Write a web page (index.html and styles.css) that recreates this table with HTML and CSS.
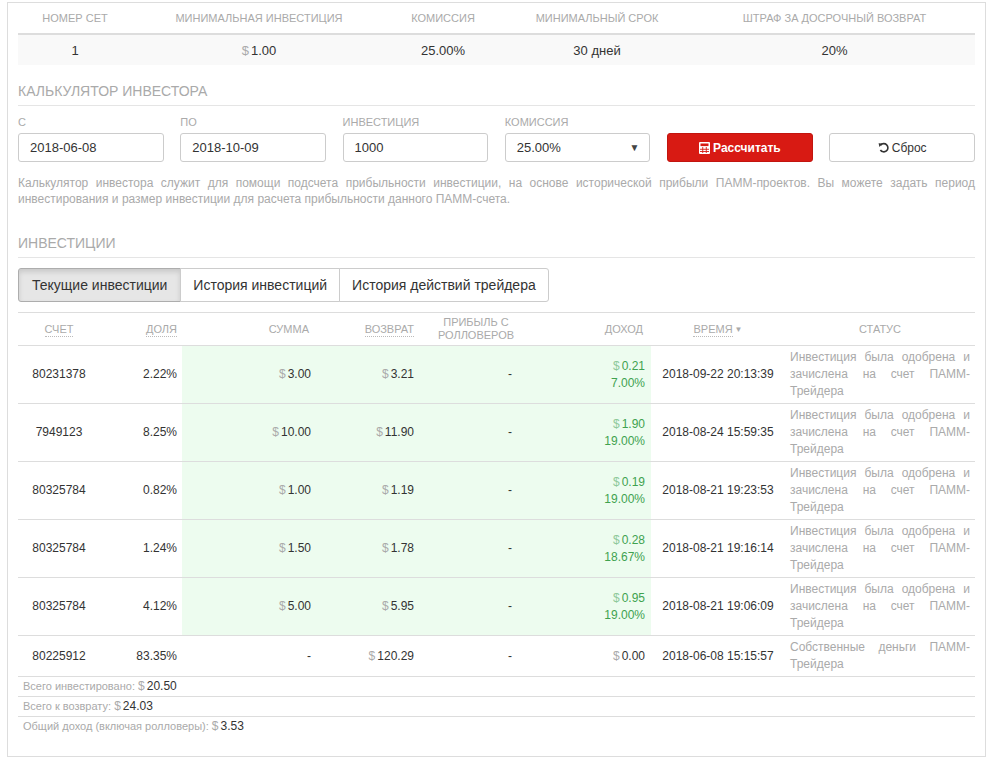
FILE: index.html
```html
<!DOCTYPE html>
<html lang="ru">
<head>
<meta charset="utf-8">
<title>ПАММ-счет</title>
<link rel="stylesheet" href="styles.css">
</head>
<body>
<div class="panel">
  <table class="info">
    <colgroup>
      <col class="ic1"><col class="ic2"><col class="ic3"><col class="ic4"><col class="ic5">
    </colgroup>
    <thead>
      <tr><th>Номер сет</th><th>Минимальная инвестиция</th><th>Комиссия</th><th>Минимальный срок</th><th>Штраф за досрочный возврат</th></tr>
    </thead>
    <tbody>
      <tr><td>1</td><td><span class="cur">$</span>1.00</td><td>25.00%</td><td>30 дней</td><td>20%</td></tr>
    </tbody>
  </table>

  <h3 class="section calc-title">Калькулятор инвестора</h3>
  <div class="calc">
    <div class="field"><label class="lbl">С</label><input class="control" type="text" value="2018-06-08"></div>
    <div class="field"><label class="lbl">По</label><input class="control" type="text" value="2018-10-09"></div>
    <div class="field"><label class="lbl">Инвестиция</label><input class="control" type="text" value="1000"></div>
    <div class="field"><label class="lbl">Комиссия</label><div class="control select">25.00%<span class="caret">▼</span></div></div>
    <div class="field"><button class="btn btn-red" type="button"><svg class="ico" width="11" height="12" viewBox="0 0 11 12"><rect x="0" y="0" width="11" height="12" rx="1" fill="#fff"/><rect x="1.5" y="1.5" width="8" height="2.6" fill="#d81a13"/><g fill="#d81a13"><rect x="3.3" y="5" width="0.9" height="6"/><rect x="6.8" y="5" width="0.9" height="6"/><rect x="1" y="6.8" width="9" height="0.9"/><rect x="1" y="9" width="9" height="0.9"/></g></svg>Рассчитать</button></div>
    <div class="field"><button class="btn btn-default" type="button"><svg class="ico" width="11" height="11" viewBox="0 0 11 11"><path d="M2.6 3.2 A4.1 4.1 0 1 1 2.4 8" fill="none" stroke="#333" stroke-width="1.6"/><polygon points="0.6,1.2 4.6,1.6 1.4,5" fill="#333"/></svg>Сброс</button></div>
  </div>
  <p class="desc">Калькулятор инвестора служит для помощи подсчета прибыльности инвестиции, на основе исторической прибыли ПАММ-проектов. Вы можете задать период инвестирования и размер инвестиции для расчета прибыльности данного ПАММ-счета.</p>

  <h3 class="section inv-title">Инвестиции</h3>
  <div class="tabs">
    <div class="tab active">Текущие инвестиции</div>
    <div class="tab">История инвестиций</div>
    <div class="tab">История действий трейдера</div>
  </div>

  <table class="inv">
    <colgroup>
      <col class="c1"><col class="c2"><col class="c3"><col class="c4"><col class="c5"><col class="c6"><col class="c7"><col class="c8">
    </colgroup>
    <thead>
      <tr>
        <th class="a-c"><span class="sort">Счет</span></th>
        <th class="a-r p2"><span class="sort">Доля</span></th>
        <th class="a-r p3">Сумма</th>
        <th class="a-r p4"><span class="sort">Возврат</span></th>
        <th class="a-c two">Прибыль с<br>ролловеров</th>
        <th class="a-r p6">Доход</th>
        <th class="a-c"><span class="sort">Время</span><span class="tri">▼</span></th>
        <th class="a-c">Статус</th>
      </tr>
    </thead>
    <tbody>
      <tr>
        <td class="a-c">80231378</td><td class="a-r p2">2.22%</td>
        <td class="a-r p3 g"><span class="cur">$</span>3.00</td><td class="a-r p4 g"><span class="cur">$</span>3.21</td>
        <td class="a-r p5 g">-</td><td class="a-r p6 g inc"><span class="cur">$</span>0.21<br>7.00%</td>
        <td class="a-c">2018-09-22 20:13:39</td><td class="status">Инвестиция была одобрена и зачислена на счет ПАММ-Трейдера</td>
      </tr>
      <tr>
        <td class="a-c">7949123</td><td class="a-r p2">8.25%</td>
        <td class="a-r p3 g"><span class="cur">$</span>10.00</td><td class="a-r p4 g"><span class="cur">$</span>11.90</td>
        <td class="a-r p5 g">-</td><td class="a-r p6 g inc"><span class="cur">$</span>1.90<br>19.00%</td>
        <td class="a-c">2018-08-24 15:59:35</td><td class="status">Инвестиция была одобрена и зачислена на счет ПАММ-Трейдера</td>
      </tr>
      <tr>
        <td class="a-c">80325784</td><td class="a-r p2">0.82%</td>
        <td class="a-r p3 g"><span class="cur">$</span>1.00</td><td class="a-r p4 g"><span class="cur">$</span>1.19</td>
        <td class="a-r p5 g">-</td><td class="a-r p6 g inc"><span class="cur">$</span>0.19<br>19.00%</td>
        <td class="a-c">2018-08-21 19:23:53</td><td class="status">Инвестиция была одобрена и зачислена на счет ПАММ-Трейдера</td>
      </tr>
      <tr>
        <td class="a-c">80325784</td><td class="a-r p2">1.24%</td>
        <td class="a-r p3 g"><span class="cur">$</span>1.50</td><td class="a-r p4 g"><span class="cur">$</span>1.78</td>
        <td class="a-r p5 g">-</td><td class="a-r p6 g inc"><span class="cur">$</span>0.28<br>18.67%</td>
        <td class="a-c">2018-08-21 19:16:14</td><td class="status">Инвестиция была одобрена и зачислена на счет ПАММ-Трейдера</td>
      </tr>
      <tr>
        <td class="a-c">80325784</td><td class="a-r p2">4.12%</td>
        <td class="a-r p3 g"><span class="cur">$</span>5.00</td><td class="a-r p4 g"><span class="cur">$</span>5.95</td>
        <td class="a-r p5 g">-</td><td class="a-r p6 g inc"><span class="cur">$</span>0.95<br>19.00%</td>
        <td class="a-c">2018-08-21 19:06:09</td><td class="status">Инвестиция была одобрена и зачислена на счет ПАММ-Трейдера</td>
      </tr>
      <tr>
        <td class="a-c">80225912</td><td class="a-r p2">83.35%</td>
        <td class="a-r p3">-</td><td class="a-r p4"><span class="cur">$</span>120.29</td>
        <td class="a-r p5">-</td><td class="a-r p6"><span class="cur">$</span>0.00</td>
        <td class="a-c">2018-06-08 15:15:57</td><td class="status">Собственные деньги ПАММ-Трейдера</td>
      </tr>
    </tbody>
  </table>
  <div class="totals">
    <div class="total">Всего инвестировано: <span class="val"><span class="cur">$</span>20.50</span></div>
    <div class="total">Всего к возврату: <span class="val"><span class="cur">$</span>24.03</span></div>
    <div class="total">Общий доход (включая ролловеры): <span class="val"><span class="cur">$</span>3.53</span></div>
  </div>
</div>
</body>
</html>
```

FILE: styles.css
```css
* { box-sizing: border-box; }
html, body { margin: 0; background: #fff; }
body {
  font-family: "Liberation Sans", Arial, sans-serif;
  font-size: 12px;
  color: #333;
  padding: 2px 7px 0;
}
.panel {
  border: 1px solid #ddd;
  padding: 0 10px 20px;
  background: #fff;
}
.cur { color: #aaa; margin-right: 2px; }

/* info table */
.info { width: 100%; border-collapse: collapse; table-layout: fixed; }
.ic1 { width: 114px; } .ic2 { width: 254px; } .ic3 { width: 114px; } .ic4 { width: 194px; } .ic5 { width: 281px; }
.info th {
  font-weight: normal; font-size: 11px; color: #aaa; text-transform: uppercase;
  height: 31px; padding: 0 5px; border-bottom: 2px solid #ddd; text-align: center;
}
.info td { height: 31px; background: #f9f9f9; text-align: center; font-size: 13px; padding: 0 5px; }

/* section titles */
.section {
  margin: 0; font-weight: normal; font-size: 14px; color: #aaa; text-transform: uppercase;
  line-height: 20px; padding-bottom: 4px; border-bottom: 1px solid #e5e5e5;
}
.calc-title { margin-top: 16px; }
.inv-title { margin-top: 26px; }

/* calculator */
.calc {
  display: grid; grid-template-columns: repeat(6, 1fr); column-gap: 16.6px;
  align-items: end; margin-top: 9px;
}
.field { display: flex; flex-direction: column; }
.lbl { font-size: 11px; color: #aaa; text-transform: uppercase; line-height: 15px; margin-bottom: 3px; }
.control {
  height: 29px; width: 100%; border: 1px solid #ccc; border-radius: 3px; background: #fff;
  font-family: "Liberation Sans", Arial, sans-serif; font-size: 13px; color: #333;
  padding: 0 11px; line-height: 27px; margin: 0;
}
.select { display: flex; justify-content: space-between; align-items: center; }
.caret { font-size: 10px; color: #444; margin-right: -1px; }
.btn {
  height: 29px; width: 100%; border-radius: 3px; font-family: "Liberation Sans", Arial, sans-serif;
  display: flex; align-items: center; justify-content: center; gap: 3px; padding: 0; margin: 0;
}
.btn-red { background: #d81a13; border: 1px solid #c2150f; color: #fff; font-size: 12px; font-weight: bold; }
.btn-default { background: #fff; border: 1px solid #ccc; color: #333; font-size: 12px; }
.ico { display: block; }
.desc {
  margin: 13px 0 0; font-size: 12px; line-height: 16px; color: #aaa; text-align: justify;
}

/* tabs */
.tabs { display: flex; margin-top: 10px; }
.tab {
  height: 34px; padding: 0 12px; border: 1px solid #ccc; background: #fff;
  font-size: 14px; line-height: 32px; color: #333;
}
.tab + .tab { margin-left: -1px; }
.tab:first-child { border-radius: 3px 0 0 3px; padding: 0 13px; }
.tab:last-child { border-radius: 0 3px 3px 0; }
.tab.active { background: #e6e6e6; border-color: #adadad; box-shadow: inset 0 3px 5px rgba(0,0,0,.125); }

/* investments table */
.inv { width: 100%; border-collapse: collapse; table-layout: fixed; margin-top: 10px; border-top: 1px solid #ddd; }
.c1 { width: 82px; } .c2 { width: 82px; } .c3 { width: 140px; } .c4 { width: 102px; }
.c5 { width: 96px; } .c6 { width: 131px; } .c7 { width: 134px; } .c8 { width: 190px; }
.inv th {
  font-weight: normal; font-size: 11px; color: #aaa; text-transform: uppercase;
  height: 33px; line-height: 13px; padding: 0 5px; border-bottom: 1px solid #ddd; vertical-align: middle;
}
.inv td { border-top: 1px solid #ddd; padding: 3px 5px; line-height: 17px; vertical-align: middle; font-size: 12px; }
.sort { border-bottom: 1px dotted #bbb; padding-bottom: 1px; }
.tri { font-size: 8px; color: #aaa; margin-left: 2px; vertical-align: 1px; }
.a-c { text-align: center; }
.a-r { text-align: right; }
.inv .p2 { padding-right: 5px; }
.inv .p3 { padding-right: 11px; }
.inv .p4 { padding-right: 10px; }
.inv .p5 { padding-right: 8px; }
.inv .p6 { padding-right: 6px; }
.inv th.p3 { padding-right: 13px; }
.inv th.p6 { padding-right: 8px; }
.inv th.two { padding: 0 0 0 8px; }
.g { background: #edfcef; }
.inc { color: #3fa24f; }
.inc .cur { color: #8fc99a; }
.status { color: #aaa; text-align: justify; }

/* totals */
.total { border-top: 1px solid #ddd; line-height: 19px; padding-left: 5px; font-size: 11px; color: #aaa; }
.total .val { font-size: 12px; color: #333; }
```
